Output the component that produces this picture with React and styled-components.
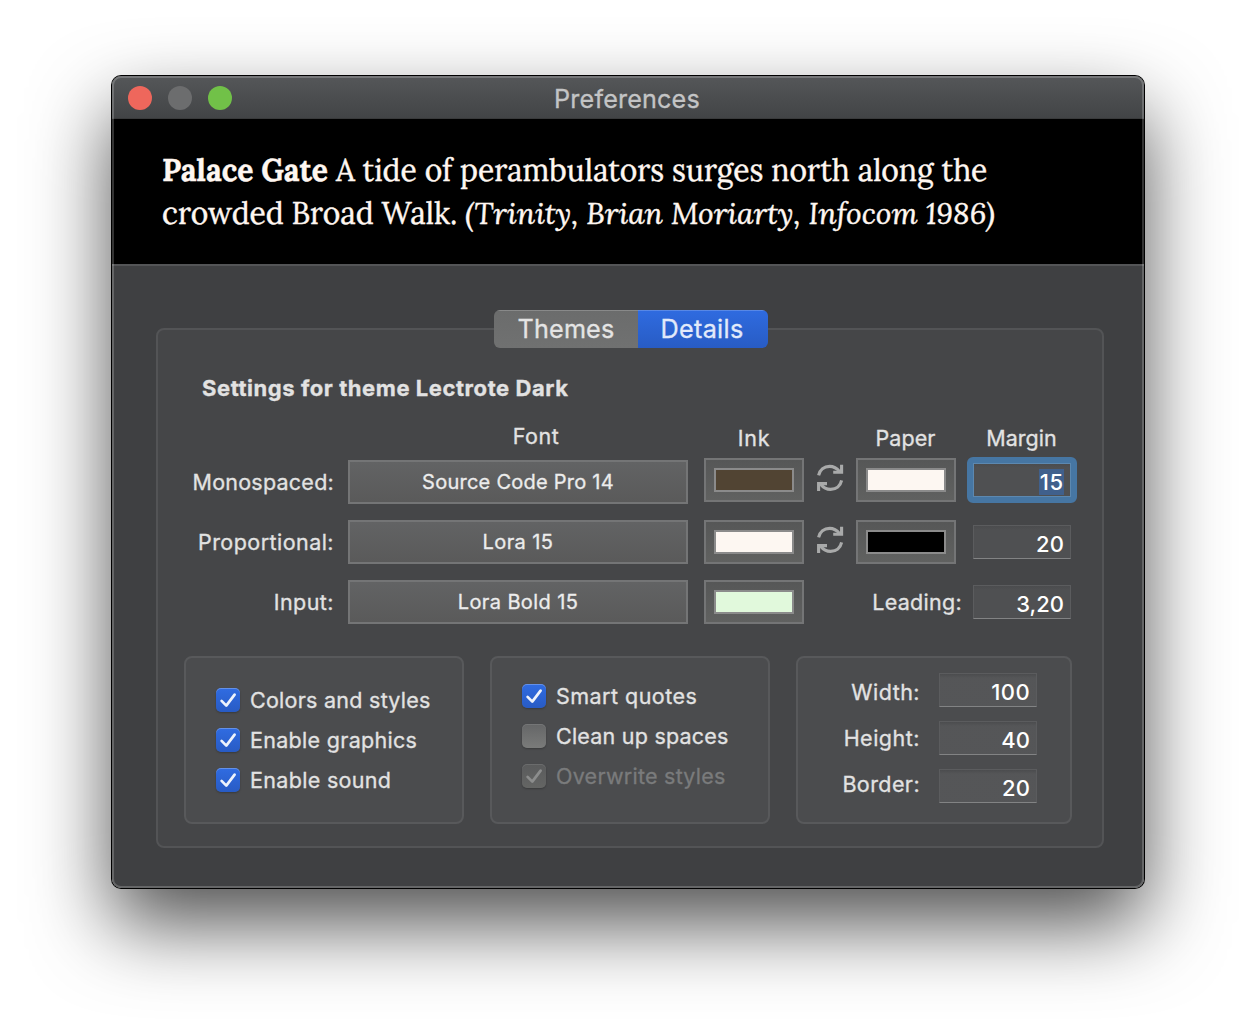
import React from "react";
import styled, { createGlobalStyle, css } from "styled-components";

const GlobalStyle = createGlobalStyle`
  *, *::before, *::after { box-sizing: border-box; }
  body {
    margin: 0;
    background: #fff;
    font-family: Inter, "Liberation Sans", sans-serif;
    color: #e2e2e2;
    overflow: hidden;
    -webkit-text-stroke-width: 0.3px;
  }
`;

const Desktop = styled.main`
  height: 1036px;
  padding: 76px 112px 0;
`;

const Window = styled.section`
  position: relative;
  width: 1032px;
  height: 812px;
  display: flex;
  flex-direction: column;
  border-radius: 9px;
  overflow: hidden;
  background: #3f4042;
`;

const WindowFrame = styled.div`
  width: 1032px;
  height: 812px;
  border-radius: 9px;
  box-shadow: 0 0 0 1px #000, 0 36px 80px rgba(0, 0, 0, 0.69);
`;

/* Light rim drawn above the whole window content. */
const Rim = styled.div`
  position: absolute;
  inset: 0;
  border: 2px solid rgba(255, 255, 255, 0.2);
  border-radius: 9px;
  pointer-events: none;
`;

const TitleBar = styled.header`
  height: 43px;
  flex: none;
  display: grid;
  grid-template-columns: 200px 1fr 200px;
  align-items: center;
  background: linear-gradient(#555759, #424446);
  border-bottom: 1px solid #393a3b;
`;

const Lights = styled.div`
  display: flex;
  gap: 16px;
  padding-left: 16px;
  margin-top: 2px;
`;

const Light = styled.span`
  width: 24px;
  height: 24px;
  border-radius: 50%;
  background: ${(p) => p.$color};
`;

const Title = styled.h1`
  margin: 4px 2px 0 0;
  text-align: center;
  font-size: 25.2px;
  font-weight: 400;
  line-height: 32px;
  letter-spacing: 0.15px;
  color: #c3c4c5;
`;

const Preview = styled.p`
  height: 145px;
  flex: none;
  margin: 0;
  padding: 30px 50px 0;
  background: #000;
  color: #fff7f1;
  font-family: Lora, "Noto Serif", "Liberation Serif", serif;
  font-size: 30px;
  line-height: 43px;
  white-space: nowrap;
  -webkit-text-stroke-width: 0.4px;
`;

const Body = styled.div`
  flex: 1;
  display: flex;
  flex-direction: column;
  align-items: center;
  border-top: 2px solid #545557;
  padding: 44px 40px 40px 44px;
`;

const Segments = styled.nav`
  height: 38px;
  flex: none;
  display: flex;
  margin-left: 2px;
  margin-bottom: -20px;
  border-radius: 6px;
  overflow: hidden;
  z-index: 1;
`;

const Segment = styled.span`
  width: ${(p) => p.$width}px;
  padding-right: ${(p) => (p.$active ? 2 : 0)}px;
  text-align: center;
  font-size: 25.2px;
  line-height: 38px;
  letter-spacing: ${(p) => p.$track}px;
  box-shadow: inset 0 1px 0 rgba(255, 255, 255, 0.2);
  background: ${(p) =>
    p.$active ? "linear-gradient(#2f6be0, #285cc4)" : "linear-gradient(#6b6c6c, #707171)"};
  color: ${(p) => (p.$active ? "#e2eafa" : "#e4e4e4")};
`;

const Group = styled.div`
  width: 948px;
  height: 520px;
  flex: none;
  display: flex;
  flex-direction: column;
  border: 2px solid #535456;
  border-radius: 8px;
  background: #454648;
`;

const Heading = styled.h2`
  margin: 42px 0 0 44px;
  font-size: 22px;
  font-weight: 700;
  line-height: 32px;
  letter-spacing: 0.56px;
`;

const grid = css`
  display: grid;
  grid-template-columns: 190px 356px 100px 52px 100px 17px 98px;
`;

const HeaderRow = styled.div`
  ${grid}
  height: 32px;
  margin-top: 16px;
`;

const ColumnTitle = styled.span`
  grid-column: ${(p) => p.$col};
  margin-top: ${(p) => p.$drop || 0}px;
  margin-right: ${(p) => p.$inset || 0}px;
  text-align: center;
  font-size: 21.5px;
  line-height: 32px;
  letter-spacing: ${(p) => p.$track}px;
`;

const Rows = styled.div`
  display: flex;
  flex-direction: column;
  gap: 16px;
  margin-top: 8px;
`;

const Row = styled.div`
  ${grid}
  height: 44px;
`;

const Label = styled.span`
  font-size: 21.5px;
  line-height: 44px;
  letter-spacing: ${(p) => p.$track || 0.35}px;
  text-align: right;
  padding-right: 14px;
`;

const LeadingLabel = styled(Label)`
  grid-column: 4 / 6;
  padding-right: 0;
  margin-right: -6px;
`;

const FontButton = styled.button`
  width: 340px;
  height: 44px;
  padding: 0;
  border: 2px solid #747576;
  background: linear-gradient(#626364, #5a5a5a);
  color: #ececec;
  font: 400 20px/40px Inter, "Liberation Sans", sans-serif;
  letter-spacing: ${(p) => p.$track}px;
`;

const Well = styled.span`
  width: 100px;
  height: 44px;
  margin-top: ${(p) => (p.$raised ? -2 : 0)}px;
  padding: 8px;
  border: 2px solid #747576;
  background: linear-gradient(#565757, #606160);
`;

const Swatch = styled.span`
  display: block;
  width: 80px;
  height: 24px;
  border: 2px solid #8b8b8b;
  background: ${(p) => p.$color};
`;

const SwapIcon = styled.svg`
  width: 28px;
  height: 28px;
  margin: ${(p) => (p.$raised ? 4 : 6)}px 0 0 12px;
`;

const Field = styled.span`
  display: block;
  position: relative;
  grid-column: ${(p) => p.$col || "auto"};
  width: 98px;
  height: 34px;
  margin-top: ${(p) => p.$top || 0}px;
  padding-right: 6px;
  border: 1px solid #5b5c5e;
  border-bottom: 1px solid #828384;
  background: linear-gradient(#4b4c4e, rgba(255, 255, 255, 0.055) 4px);
  background-color: ${(p) => (p.$light ? "#4b4c4e" : "#454648")};
  color: #fff;
  text-align: right;
  font-size: 22px;
  font-weight: 500;
  line-height: 36px;
  letter-spacing: ${(p) => p.$track || 0}px;
  -webkit-text-stroke-width: 0;
  ${(p) =>
    p.$focused &&
    css`
      border-color: #5c88b0;
      &::after {
        content: "";
        position: absolute;
        inset: -7px;
        border: 6px solid #4676a3;
        border-radius: 6px;
      }
    `}
`;

const Selection = styled.span`
  display: inline-block;
  height: 26px;
  padding-left: 1px;
  line-height: 27px;
  background: #40608c;
`;

const Boxes = styled.div`
  display: grid;
  grid-template-columns: 280px 280px 276px;
  gap: 26px;
  margin: 32px 0 0 26px;
`;

const Box = styled.div`
  height: 168px;
  border: 2px solid #58595b;
  border-radius: 8px;
  background: #4b4c4e;
  padding: ${(p) => p.$top}px 0 0 30px;
`;

const Options = styled(Box)`
  display: flex;
  flex-direction: column;
  gap: 16px;
`;

const Option = styled.label`
  display: flex;
  align-items: center;
  gap: 10px;
  height: 24px;
  font-size: 21.5px;
  line-height: 24px;
  letter-spacing: ${(p) => p.$track}px;
  white-space: nowrap;
  color: ${(p) => (p.$disabled ? "#7a7b7c" : "#e2e2e2")};
`;

const fills = {
  on: "linear-gradient(#306ce2, #285bc4)",
  off: "linear-gradient(#656667, #7a7b7a)",
  disabled: "linear-gradient(#5a5b5c, #646564)",
};

const Check = styled.span`
  width: 24px;
  height: 24px;
  flex: none;
  border-radius: 5px;
  background: ${(p) => fills[p.$state]};
  box-shadow: 0 1px 2px rgba(0, 0, 0, 0.25),
    inset 0 1px 0 rgba(255, 255, 255, ${(p) => (p.$state === "on" ? 0.25 : 0.1)});
  svg { display: block; }
`;

const SizeBox = styled(Box)`
  display: grid;
  grid-template-columns: 92px 98px;
  column-gap: 19px;
  justify-content: start;
`;

const SizeLabels = styled.div`
  display: flex;
  flex-direction: column;
  gap: 14px;
  padding-top: 3px;
`;

const SizeLabel = styled(Label)`
  line-height: 32px;
  padding: 0;
`;

const SizeFields = styled.div`
  display: flex;
  flex-direction: column;
  gap: 14px;
`;

function Swap({ raised }) {
  return (
    <SwapIcon $raised={raised} viewBox="0 0 28 28" fill="none" stroke="#a9aaaa" strokeWidth="3.1">
      <path d="M2.6 11.4C3.8 5.8 8.2 2.4 13.6 2.4C17.8 2.4 21.2 4.6 23.6 7.6" />
      <path d="M25.6 0.8V8.2H17.2" />
      <path d="M25.4 2.6V8.6H19L24 6.6Z" fill="#a9aaaa" stroke="none" />
      <path d="M25.6 16.4C24.4 22 20 25.4 14.6 25.4C10.4 25.4 7 23.2 4.6 20.2" />
      <path d="M2.6 27V19.6H11" />
      <path d="M2.8 25.2V19.2H9.2L4.2 21.2Z" fill="#a9aaaa" stroke="none" />
    </SwapIcon>
  );
}

function CheckOption({ text, track, state }) {
  return (
    <Option $track={track} $disabled={state === "disabled"}>
      <Check $state={state}>
        {state !== "off" && (
          <svg width="24" height="24" viewBox="0 0 24 24" fill="none">
            <path
              d="M5.6 12.9L10.3 17.6L18.6 6.6"
              stroke={state === "on" ? "#eef3fc" : "#8c8d8d"}
              strokeWidth="2.7"
              strokeLinecap="round"
              strokeLinejoin="round"
            />
          </svg>
        )}
      </Check>
      {text}
    </Option>
  );
}

export default function App() {
  return (
    <Desktop>
      <GlobalStyle />
      <WindowFrame>
        <Window>
          <TitleBar>
            <Lights>
              <Light $color="#ee675c" />
              <Light $color="#6c6d6e" />
              <Light $color="#71c148" />
            </Lights>
            <Title>Preferences</Title>
          </TitleBar>
          <Preview>
            <b>Palace Gate</b> A tide of perambulators surges north along the
            <br />
            crowded Broad Walk. <i>(Trinity, Brian Moriarty, Infocom 1986)</i>
          </Preview>
          <Body>
            <Segments>
              <Segment $width={144} $track={0.15}>Themes</Segment>
              <Segment $width={130} $track={0.3} $active>Details</Segment>
            </Segments>
            <Group>
              <Heading>Settings for theme Lectrote Dark</Heading>
              <HeaderRow>
                <ColumnTitle $col={2} $inset={-20} $track={0.5}>Font</ColumnTitle>
                <ColumnTitle $col={3} $drop={2} $track={0.7}>Ink</ColumnTitle>
                <ColumnTitle $col={5} $drop={2} $inset={1} $track={0.1}>Paper</ColumnTitle>
                <ColumnTitle $col={7} $drop={2} $inset={1} $track={0.05}>Margin</ColumnTitle>
              </HeaderRow>
              <Rows>
                <Row>
                  <Label $track={0.24}>Monospaced:</Label>
                  <FontButton $track={0.25}>Source Code Pro 14</FontButton>
                  <Well $raised><Swatch $color="#514433" /></Well>
                  <Swap raised />
                  <Well $raised><Swatch $color="#fdf7f2" /></Well>
                  <Field $col={7} $top={3} $focused $track={0.8}>
                    <Selection>15</Selection>
                  </Field>
                </Row>
                <Row>
                  <Label $track={0.45}>Proportional:</Label>
                  <FontButton $track={0.42}>Lora 15</FontButton>
                  <Well><Swatch $color="#fdf7f2" /></Well>
                  <Swap />
                  <Well><Swatch $color="#000" /></Well>
                  <Field $col={7} $top={5} $track={0.1}>20</Field>
                </Row>
                <Row>
                  <Label $track={0.45}>Input:</Label>
                  <FontButton $track={0.4}>Lora Bold 15</FontButton>
                  <Well><Swatch $color="#e1f9dc" /></Well>
                  <LeadingLabel $track={0.3}>Leading:</LeadingLabel>
                  <Field $col={7} $top={5} $track={0}>3,20</Field>
                </Row>
              </Rows>
              <Boxes>
                <Options $top={30}>
                  <CheckOption text="Colors and styles" track={0.26} state="on" />
                  <CheckOption text="Enable graphics" track={0.3} state="on" />
                  <CheckOption text="Enable sound" track={0.32} state="on" />
                </Options>
                <Options $top={26}>
                  <CheckOption text="Smart quotes" track={0.47} state="on" />
                  <CheckOption text="Clean up spaces" track={0.22} state="off" />
                  <CheckOption text="Overwrite styles" track={0.25} state="disabled" />
                </Options>
                <SizeBox $top={15}>
                  <SizeLabels>
                    <SizeLabel $track={0.47}>Width:</SizeLabel>
                    <SizeLabel $track={0.5}>Height:</SizeLabel>
                    <SizeLabel $track={0.42}>Border:</SizeLabel>
                  </SizeLabels>
                  <SizeFields>
                    <Field $light $track={0.4}>100</Field>
                    <Field $light $track={0.1}>40</Field>
                    <Field $light $track={0.1}>20</Field>
                  </SizeFields>
                </SizeBox>
              </Boxes>
            </Group>
          </Body>
          <Rim />
        </Window>
      </WindowFrame>
    </Desktop>
  );
}
